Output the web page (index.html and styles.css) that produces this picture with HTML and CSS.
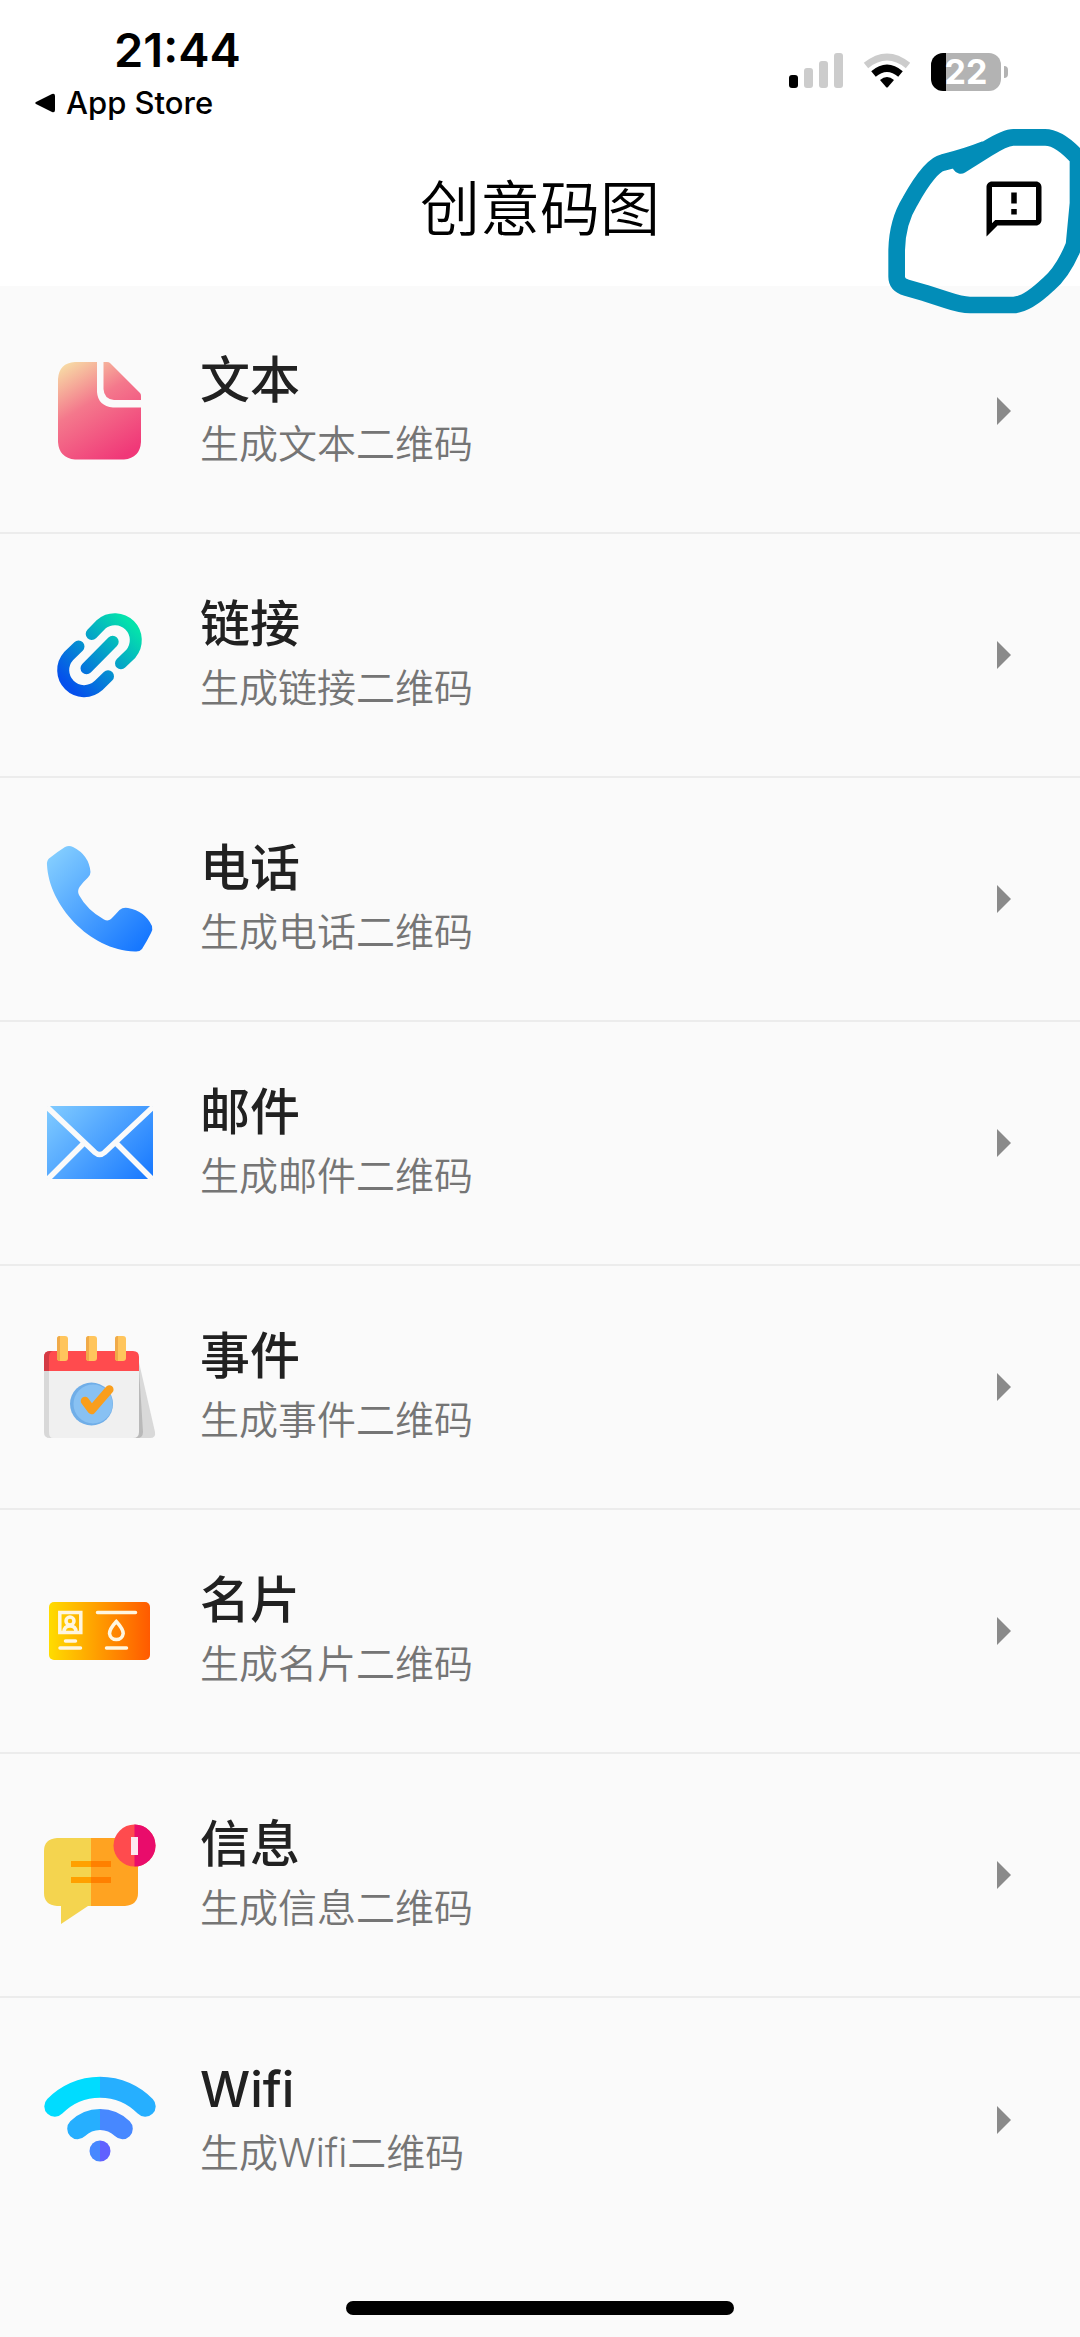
FILE: index.html
```html
<!DOCTYPE html>
<html lang="zh-CN">
  <head>
    <meta charset="utf-8">
    <title>创意码图</title>
    <meta name="viewport" content="width=device-width,initial-scale=1">
    <link rel="stylesheet" href="styles.css">
  </head>
  <body>
    <header class="header">
      <div class="status-bar">
        <div class="status-left">
          <span class="time">21:44</span>
          <a class="back-link" href="#">
            <svg width="20" height="20" viewBox="0 0 20 20"><path d="M1 9 17 1q3-1 3 2v14q0 3-3 2L1 11q-1.500-1 0-2z"/></svg>
            App Store
          </a>
        </div>
        <div class="status-right">
          <svg width="54" height="36" viewBox="0 0 54 36">
            <rect x="0" y="22" width="9" height="13" rx="3"/>
            <g fill="#ccc">
              <rect x="15" y="15" width="9" height="20" rx="3"/>
              <rect x="30" y="8" width="9" height="27" rx="3"/>
              <rect x="45" y="0" width="9" height="35" rx="3"/>
            </g>
          </svg>
          <svg width="48" height="36" viewBox="0 0 48 36">
            <path d="M3 12.500Q24-4.500 45 12.500" fill="none" stroke="#ccc" stroke-width="7"/>
            <path d="M10.500 21Q24 9.500 37.500 21" fill="none" stroke="#000" stroke-width="7"/>
            <path d="M17 27q7-6 14 0l-6 7q-1 1-2 0z"/>
          </svg>
          <div class="battery">
            <span class="battery-level">22</span>
          </div>
        </div>
      </div>
      <div class="title-bar">
        <h1 class="title">创意码图</h1>
        <button class="feedback" aria-label="反馈">
          <svg width="66" height="66" viewBox="0 0 24 24"><path d="M20 2H4c-1.100 0-2 .9-2 2v18l4-4h14c1.100 0 2-.9 2-2V4c0-1.100-.9-2-2-2zm0 14H5.170L4 17.170V4h16v12zm-9-4h2v2h-2zm0-6h2v4h-2z"/></svg>
        </button>
      </div>
      <!-- hand drawn circle around the feedback button -->
      <svg class="scribble" width="200" height="200" viewBox="420 360 600 600">
        <path d="M662 496 742 446Q796 412 820 412H915C950 412 985 442 1014 474V610L1002 735Q970 815 925 853Q860 915 820 915H690Q665 915 620 900L555 879 500 863Q470 854 470 830V750Q472 665 510 604Q570 496 608 488Q680 470 735 448"/>
      </svg>
    </header>

    <main class="list">
      <a class="item" href="#">
        <svg class="icon" viewBox="0 0 112 112">
          <linearGradient id="doc" x1="14" y1="7" x2="75" y2="104" gradientUnits="userSpaceOnUse">
            <stop offset="0" stop-color="#f7e6a8"/>
            <stop offset=".45" stop-color="#f4788c"/>
            <stop offset="1" stop-color="#f03878"/>
          </linearGradient>
          <g fill="url(#doc)">
            <path d="M31 7H53V37Q54 51 69 52.500H97V87Q96 103 80 104.500H31Q15 103 14 87V24Q15 8 31 7z"/>
            <path d="M59.500 7H63Q65 7 66 8L96 38Q97 39 97 41V45H70Q60 44 59.500 34z"/>
          </g>
        </svg>
        <div class="text">
          <h2 class="name">文本</h2>
          <p class="desc">生成文本二维码</p>
        </div>
        <span class="arrow"></span>
      </a>

      <a class="item" href="#">
        <svg class="icon" viewBox="0 0 112 112">
          <linearGradient id="link" x1="25" y1="87" x2="87" y2="25" gradientUnits="userSpaceOnUse">
            <stop offset="0" stop-color="#0550ec"/>
            <stop offset="1" stop-color="#04e2ac"/>
          </linearGradient>
          <g fill="none" stroke="url(#link)" stroke-width="12" stroke-linecap="round">
            <path d="M47.700 35 57.200 25.200A21 21 0 0 1 86.800 54.800L77 64.300"/>
            <path d="M42.500 69.300 68.700 42.700"/>
            <path d="M34.500 47.500 24.500 57.200A21 21 0 0 0 54.200 86.800L64 77.300"/>
          </g>
        </svg>
        <div class="text">
          <h2 class="name">链接</h2>
          <p class="desc">生成链接二维码</p>
        </div>
        <span class="arrow"></span>
      </a>

      <a class="item" href="#">
        <svg class="icon" viewBox="0 0 112 112">
          <linearGradient id="blue" x1="8" y1="10" x2="100" y2="100" gradientUnits="userSpaceOnUse">
            <stop offset="0" stop-color="#84ceff"/>
            <stop offset="1" stop-color="#1677ff"/>
          </linearGradient>
          <path fill="url(#blue)" d="M3 22Q2.500 18 5 15.500 13 9 21 4 25 1.800 29 4 45 12 46.500 29 46.500 32 44 34.500 39 39 35.500 44 33 48 35 52 43 67 60 76.500 64 78.500 67 76 71 72 75.500 67 79 64 84 65 101 68 108 83 109 87 107 90 103 98 98 106 95.500 109 91 108.500C45 107 5 62 3 22z"/>
        </svg>
        <div class="text">
          <h2 class="name">电话</h2>
          <p class="desc">生成电话二维码</p>
        </div>
        <span class="arrow"></span>
      </a>

      <a class="item" href="#">
        <svg class="icon" viewBox="0 0 112 112">
          <rect x="3" y="19" width="106" height="73" rx="3" fill="url(#blue)"/>
          <g fill="none" stroke="#fafafa" stroke-width="5.500">
            <path d="M3 20 51 65.500Q55.700 69.500 60.500 65.500L109 20"/>
            <path d="M40 56 4 92M72 56 108 92"/>
          </g>
        </svg>
        <div class="text">
          <h2 class="name">邮件</h2>
          <p class="desc">生成邮件二维码</p>
        </div>
        <span class="arrow"></span>
      </a>

      <a class="item" href="#">
        <svg class="icon" viewBox="0 0 112 112">
          <path d="M94 27 111 101Q112 107 106 107H90z" fill="#d9d9d9"/>
          <path d="M95 38 99 101Q99 107 93 107H80z" fill="#b9b9b9"/>
          <path d="M0 38H95V101Q95 107 89 107H6Q0 107 0 101z" fill="#f0f0f0"/>
          <path d="M0 38H5V101Q5 107 9 107H6Q0 107 0 101z" fill="#d8d8d8"/>
          <path d="M0 40V26Q0 20 6 20H89Q95 20 95 26V40z" fill="#ff4b4e"/>
          <path d="M0 40V26Q0 20 6 20H9Q5 21 5 26V40z" fill="#d43a44"/>
          <g fill="#ffc55c">
            <rect x="13" y="5" width="11" height="25" rx="3"/>
            <rect x="42" y="5" width="11" height="25" rx="3"/>
            <rect x="71" y="5" width="11" height="25" rx="3"/>
          </g>
          <path d="M16 5q-3 0-3 3v19q0 3 3 3zM45 5q-3 0-3 3v19q0 3 3 3zM74 5q-3 0-3 3v19q0 3 3 3z" fill="#f0aa48"/>
          <circle cx="47.500" cy="73" r="21.500" fill="#70aee8"/>
          <circle cx="49" cy="73" r="19.500" fill="#88c1f3"/>
          <path d="M41 70 47.700 79 65.300 58.500" fill="none" stroke="#f99e1c" stroke-width="8.500" stroke-linecap="round" stroke-linejoin="round"/>
        </svg>
        <div class="text">
          <h2 class="name">事件</h2>
          <p class="desc">生成事件二维码</p>
        </div>
        <span class="arrow"></span>
      </a>

      <a class="item" href="#">
        <svg class="icon" viewBox="0 0 112 112">
          <linearGradient id="card">
            <stop offset="0" stop-color="#ffdc00"/>
            <stop offset="1" stop-color="#ff5a00"/>
          </linearGradient>
          <rect x="5" y="27" width="101" height="58" rx="5" fill="url(#card)"/>
          <g fill="none" stroke="#fff6e0" stroke-width="3.500" stroke-linecap="round">
            <rect x="15.800" y="37.500" width="21" height="20"/>
            <circle cx="26" cy="46" r="4"/>
            <path d="M20 57Q20 51 26 51T32 57"/>
            <path d="M21.500 66H31.500M16 73H36.500M53.500 37.500H91.500M62.500 73H82.500"/>
            <path d="M72.300 46.500Q65.500 54 65.500 58.500A6.900 6.900 0 0 0 79.200 58.500Q79.200 54 72.300 46.500z"/>
          </g>
        </svg>
        <div class="text">
          <h2 class="name">名片</h2>
          <p class="desc">生成名片二维码</p>
        </div>
        <span class="arrow"></span>
      </a>

      <a class="item" href="#">
        <svg class="icon" viewBox="0 0 112 112">
          <path d="M47 19H13Q0 20 0 32V74Q0 86 13 87H17V105L44 87H47z" fill="#f4d44f"/>
          <path d="M47 19H81Q94 20 94 32V74Q94 86 81 87H47z" fill="#ffa321"/>
          <path d="M27 42H47V48H27zM27 58H47V64H27z" fill="#ffa000"/>
          <path d="M47 42H67V48H47zM47 58H67V64H47z" fill="#ff8000"/>
          <circle cx="90.500" cy="26.500" r="21" fill="#ff4b4e"/>
          <path d="M90.500 5.500A21 21 0 0 1 90.500 47.500z" fill="#e90c6b"/>
          <path d="M87 18H94V36H87z" fill="#fde8f0"/>
        </svg>
        <div class="text">
          <h2 class="name">信息</h2>
          <p class="desc">生成信息二维码</p>
        </div>
        <span class="arrow"></span>
      </a>

      <a class="item" href="#">
        <svg class="icon" viewBox="0 0 112 112">
          <linearGradient id="wifi1" x1="0" x2="112" y1="0" y2="0" gradientUnits="userSpaceOnUse">
            <stop offset=".5" stop-color="#00dcff"/>
            <stop offset=".5" stop-color="#26afff"/>
          </linearGradient>
          <linearGradient id="wifi2" x1="0" x2="112" y1="0" y2="0" gradientUnits="userSpaceOnUse">
            <stop offset=".5" stop-color="#26afff"/>
            <stop offset=".5" stop-color="#4788ff"/>
          </linearGradient>
          <linearGradient id="wifi3" x1="0" x2="112" y1="0" y2="0" gradientUnits="userSpaceOnUse">
            <stop offset=".5" stop-color="#4788ff"/>
            <stop offset=".5" stop-color="#6160ff"/>
          </linearGradient>
          <g fill="none" stroke-width="21" stroke-linecap="round">
            <path d="M10.800 42.300A63 63 0 0 1 101.200 42.300" stroke="url(#wifi1)"/>
            <path d="M33.700 64.700A31.500 31.500 0 0 1 78.300 64.700" stroke="url(#wifi2)"/>
          </g>
          <circle cx="56" cy="87" r="10.500" fill="url(#wifi3)"/>
        </svg>
        <div class="text">
          <h2 class="name">Wifi</h2>
          <p class="desc">生成Wifi二维码</p>
        </div>
        <span class="arrow"></span>
      </a>
    </main>

    <div class="home-indicator"></div>
  </body>
</html>
```

FILE: styles.css
```css
* {
  box-sizing: border-box;
}

body {
  margin: 0;
  min-height: 100vh;
  display: flex;
  flex-direction: column;
  background: #fafafa;
  color: #000;
  font-family: Inter, "Noto Sans CJK SC", sans-serif;
}

h1, h2, p {
  margin: 0;
}

a {
  color: inherit;
  text-decoration: none;
}

/* header */
.header {
  position: relative;
  background: #fff;
}

.status-bar {
  display: flex;
  justify-content: space-between;
  padding: 24px 79px 0 35px;
  height: 132px;
}

.status-left {
  display: flex;
  flex-direction: column;
}

.time {
  padding-left: 79px;
  font-size: 47px;
  line-height: 52px;
  font-weight: 600;
}

.back-link {
  display: flex;
  align-items: center;
  gap: 11px;
  font-size: 31px;
  line-height: 54px;
  font-weight: 500;
}

.status-right {
  display: flex;
  align-items: flex-start;
  gap: 20px;
  padding-top: 29px;
}

.battery {
  position: relative;
  width: 70px;
  height: 38px;
  border-radius: 12px;
  background: linear-gradient(to right, #000 22%, #b3b3b3 22%);
  color: #fff;
  text-align: center;
}

.battery::after {
  content: "";
  position: absolute;
  top: 13px;
  right: -7px;
  width: 4px;
  height: 12px;
  border-radius: 0 6px 6px 0;
  background: #b3b3b3;
}

.battery-level {
  display: block;
  font-size: 34px;
  line-height: 38px;
  font-weight: 700;
}

.title-bar {
  display: grid;
  grid-template-columns: 1fr auto 1fr;
  align-items: center;
  height: 154px;
  padding: 0 33px;
}

.title {
  grid-column: 2;
  font-size: 60px;
  line-height: 72px;
  font-weight: 350;
}

.feedback {
  justify-self: end;
  display: flex;
  padding: 0;
  border: 0;
  background: none;
}

.scribble {
  position: absolute;
  top: 120px;
  right: 0;
  z-index: 1;
  pointer-events: none;
  fill: none;
  stroke: #028db8;
  stroke-width: 50;
  stroke-linecap: round;
  stroke-linejoin: round;
}

/* list */
.list {
  padding-top: 4px;
}

.item {
  display: flex;
  align-items: center;
  gap: 44px;
  height: 244px;
  padding: 0 69px 0 44px;
  border-bottom: 2px solid #ececec;
}

.item:last-child {
  border-bottom: 0;
}

.icon {
  width: 112px;
  height: 112px;
  flex: none;
}

.text {
  flex: 1;
}

.name {
  color: #212121;
  font-size: 50px;
  line-height: 66px;
  font-weight: 500;
}

.desc {
  color: #757575;
  font-size: 39px;
  line-height: 62px;
  font-weight: 350;
}

.arrow {
  border-left: 14px solid #8a8a8a;
  border-top: 14px solid transparent;
  border-bottom: 14px solid transparent;
}

.home-indicator {
  width: 36%;
  height: 14px;
  margin: auto auto 22px;
  border-radius: 7px;
  background: #000;
}
```
